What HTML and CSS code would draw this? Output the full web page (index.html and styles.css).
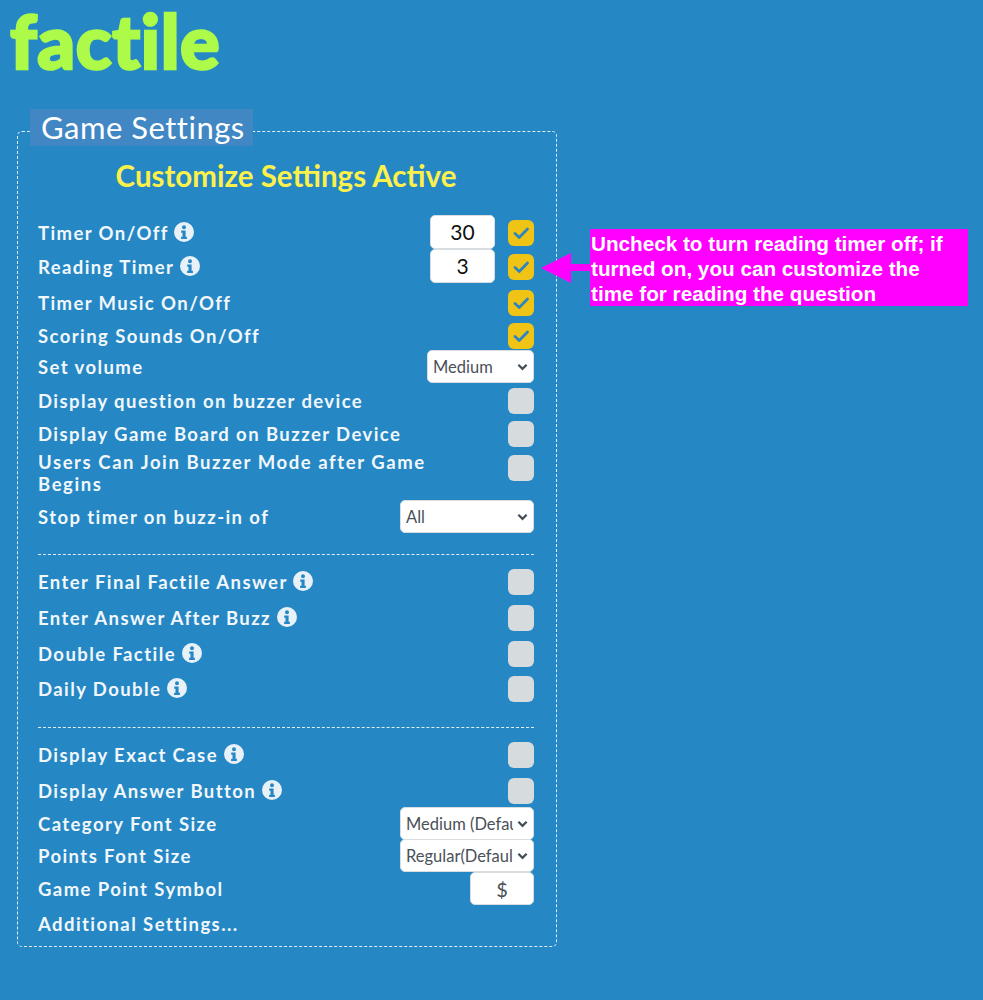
FILE: index.html
```html
<!DOCTYPE html>
<html lang="en">
<head>
<meta charset="utf-8">
<title>Game Settings</title>
<link rel="stylesheet" href="styles.css">
</head>
<body>
<svg class="defs" width="0" height="0" aria-hidden="true">
  <symbol id="chk" viewBox="0 0 26 26"><path d="M7 13.5l4.2 4L19.5 9" fill="none" stroke="#2f86bf" stroke-width="2.8" stroke-linecap="round" stroke-linejoin="round"/></symbol>
  <symbol id="info" viewBox="0 0 20 20"><path fill-rule="evenodd" fill="#e8f1f8" d="M10 0a10 10 0 1 0 0 20 10 10 0 0 0 0-20zM10 3.2a2 2 0 1 1 0 4 2 2 0 0 1 0-4zM7.2 8.6h4.4v6.2h1.3v2.2H7.1v-2.2h1.4v-4H7.2z"/></symbol>
  <symbol id="chev" viewBox="0 0 12 8"><path d="M1.5 1.5L6 6l4.5-4.5" fill="none" stroke="#444c55" stroke-width="2.4"/></symbol>
</svg>
<header class="logo">factile</header>
<main class="panel">
  <h2 class="legend">Game Settings</h2>
  <h3 class="active">Customize Settings Active</h3>
  <div class="row first"><span class="lbl">Timer On/Off <svg class="i"><use href="#info"/></svg></span><input class="num" value="30"><span class="cb on"><svg><use href="#chk"/></svg></span></div>
  <div class="row m3"><span class="lbl">Reading Timer <svg class="i"><use href="#info"/></svg></span><input class="num" value="3"><span class="cb on"><svg><use href="#chk"/></svg></span></div>
  <div class="row m5"><span class="lbl">Timer Music On/Off</span><span class="cb on"><svg><use href="#chk"/></svg></span></div>
  <div class="row m2"><span class="lbl">Scoring Sounds On/Off</span><span class="cb on"><svg><use href="#chk"/></svg></span></div>
  <div class="row"><span class="lbl">Set volume</span><span class="sel w107"><select><option>Medium</option></select><svg><use href="#chev"/></svg></span></div>
  <div class="row m3"><span class="lbl">Display question on buzzer device</span><span class="cb"></span></div>
  <div class="row m2"><span class="lbl">Display Game Board on Buzzer Device</span><span class="cb"></span></div>
  <div class="row tall m1"><span class="lbl narrow">Users Can Join Buzzer Mode after Game Begins</span><span class="cb top"></span></div>
  <div class="row m6"><span class="lbl">Stop timer on buzz-in of</span><span class="sel w134"><select><option>All</option></select><svg><use href="#chev"/></svg></span></div>
  <hr class="rule">
  <div class="row"><span class="lbl">Enter Final Factile Answer <svg class="i"><use href="#info"/></svg></span><span class="cb"></span></div>
  <div class="row m5"><span class="lbl">Enter Answer After Buzz <svg class="i"><use href="#info"/></svg></span><span class="cb"></span></div>
  <div class="row m5"><span class="lbl">Double Factile <svg class="i"><use href="#info"/></svg></span><span class="cb"></span></div>
  <div class="row m4"><span class="lbl">Daily Double <svg class="i"><use href="#info"/></svg></span><span class="cb"></span></div>
  <hr class="rule second">
  <div class="row m2"><span class="lbl">Display Exact Case <svg class="i"><use href="#info"/></svg></span><span class="cb"></span></div>
  <div class="row m5"><span class="lbl">Display Answer Button <svg class="i"><use href="#info"/></svg></span><span class="cb"></span></div>
  <div class="row m2"><span class="lbl">Category Font Size</span><span class="sel w134"><select><option>Medium (Default)</option></select><svg><use href="#chev"/></svg></span></div>
  <div class="row m1"><span class="lbl">Points Font Size</span><span class="sel w134"><select><option>Regular(Default)</option></select><svg><use href="#chev"/></svg></span></div>
  <div class="row m2"><span class="lbl">Game Point Symbol</span><input class="sym" value="$"></div>
  <div class="row m4"><span class="lbl">Additional Settings...</span></div>
</main>
<aside class="note">Uncheck to turn reading timer off; if turned on, you can customize the time for reading the question</aside>
<svg class="arrow" width="50" height="30" viewBox="0 0 50 30"><path d="M0 15L30 0v11h20v7H30v12z" fill="#ff00ff"/></svg>
</body>
</html>
```
FILE: styles.css
```css
* { box-sizing: border-box; }
html, body { margin: 0; height: 1000px; overflow: hidden; }
body { background: #2588c5; font-family: Lato, "Open Sans", sans-serif; color: #fff; position: relative; }
.defs { position: absolute; }
.logo { height: 109px; padding: 0 0 0 10px; font-family: Lato, sans-serif; font-weight: 900; font-size: 74px; line-height: 82px; letter-spacing: .6px; color: #adfb48; -webkit-text-stroke: 2.5px #adfb48; paint-order: stroke fill; }
.panel { margin: 22px 0 0 17px; width: 540px; height: 816px; border: 1.5px dashed #e3eff7; border-radius: 5px; padding: 0 22px 0 20px; }
.legend { display: block; width: 223px; margin: -23px 0 0 -8px; padding: 0 11px; height: 37px; background: #4187c4; font-size: 31px; line-height: 37px; font-weight: 400; letter-spacing: .5px; white-space: nowrap; }
.active { margin: 11px 0 0; height: 38px; text-align: center; font-size: 29.5px; line-height: 38px; font-weight: 700; color: #fcf04b; }
.row { display: flex; align-items: center; gap: 13px; height: 31px; }
.first { margin-top: 22px; }
.m1 { margin-top: 1px; }
.m2 { margin-top: 2px; }
.m3 { margin-top: 3px; }
.m4 { margin-top: 4px; }
.m5 { margin-top: 5px; }
.m6 { margin-top: 6px; }
.tall { height: 45px; }
.lbl { margin: 1px auto 0 0; font-size: 18.5px; line-height: 22.5px; font-weight: 700; letter-spacing: 1.42px; color: #f2f7fb; white-space: nowrap; }
.lbl.narrow { width: 420px; white-space: normal; letter-spacing: 1.58px; }
.i { width: 20px; height: 20px; vertical-align: -2px; }
.cb { flex: none; width: 26px; height: 26px; border-radius: 6px; background: #d6dbde; }
.cb.on { background: #efc414; }
.cb svg { display: block; width: 26px; height: 26px; }
.cb.top { align-self: flex-start; margin-top: 4.5px; }
.num { flex: none; width: 65px; height: 34px; margin-bottom: 2px; border: 1px solid #d8dde2; border-radius: 5px; background: #fff; text-align: center; font: 400 21px Lato, sans-serif; color: #111; padding: 0; }
.sym { flex: none; width: 64px; height: 33px; border: 1px solid #d8dde2; border-radius: 5px; background: #fff; text-align: center; font: 400 20px Lato, sans-serif; color: #4a5159; padding: 0; }
.sel { position: relative; flex: none; display: block; height: 33px; }
.w107 { width: 107px; }
.w134 { width: 134px; }
.sel select { appearance: none; width: 100%; height: 100%; border: 1px solid #d8dde2; border-radius: 5px; background: #fff; padding: 0 20px 0 5px; font: 400 16.5px Lato, sans-serif; color: #4a5159; }
.sel svg { position: absolute; right: 6px; top: 13px; width: 11px; height: 8px; pointer-events: none; }
.rule { margin: 22px 0 11px; border: 0; border-top: 1.5px dashed #e3eff7; }
.rule.second { margin-top: 23px; }
.note { position: absolute; left: 590px; top: 229px; width: 378px; height: 77px; padding: 2px 24px 0 1px; background: #ff00ff; color: #fff; font: 700 20.7px/25px "Liberation Sans", Arial, sans-serif; }
.arrow { position: absolute; left: 541px; top: 253px; }
```
